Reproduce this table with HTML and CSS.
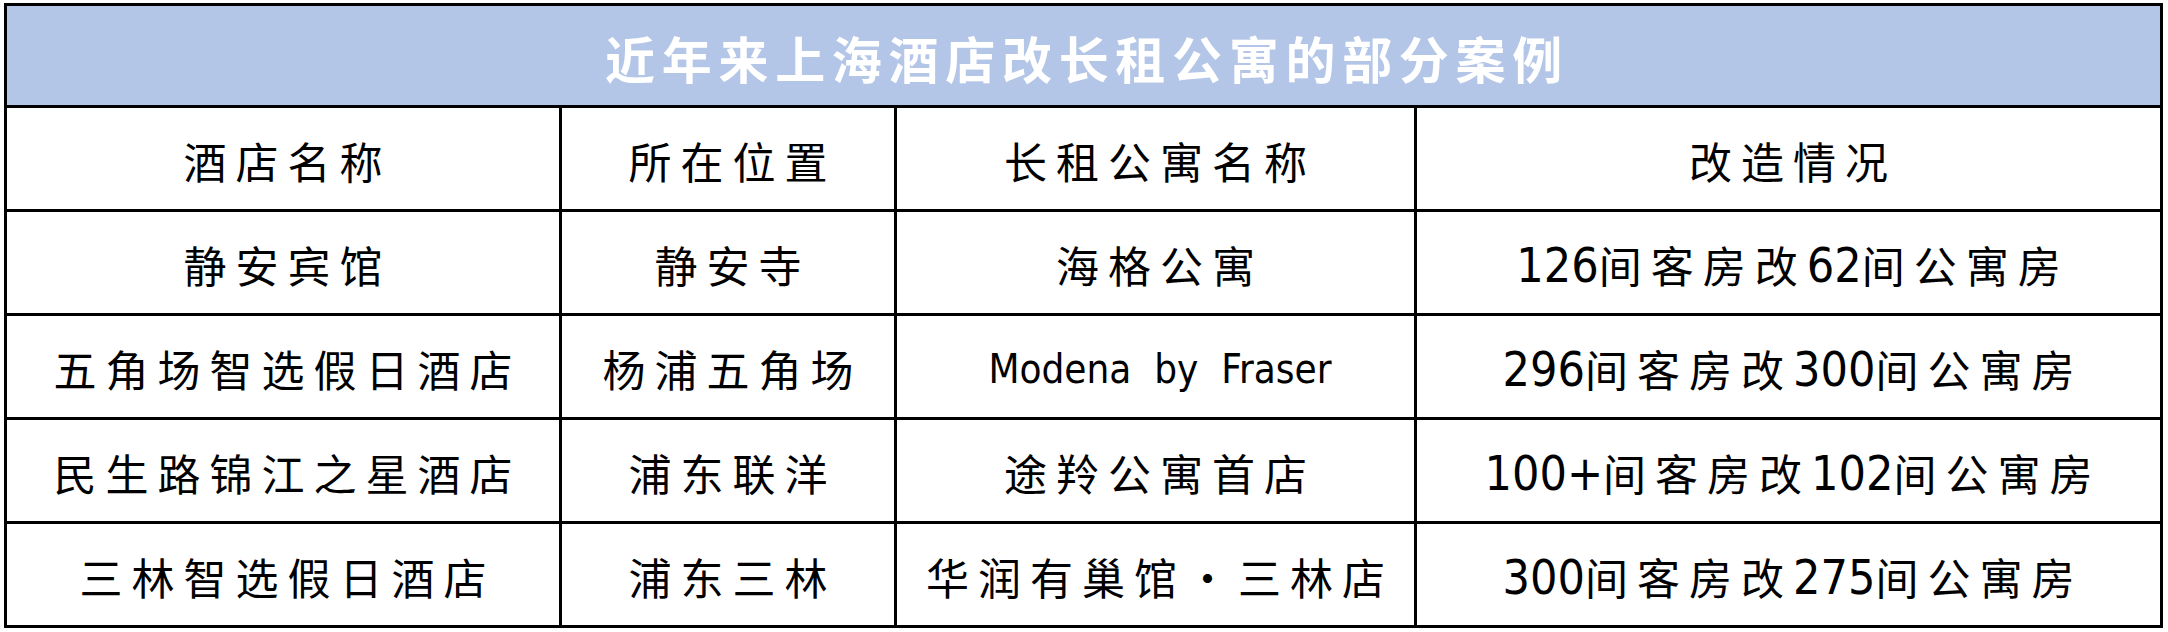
FILE: index.html
```html
<!DOCTYPE html>
<html lang="zh-CN">
<head>
<meta charset="utf-8">
<title>近年来上海酒店改长租公寓的部分案例</title>
<link rel="stylesheet" href="styles.css">
</head>
<body>
<div class="sheet">
  <div class="table">
    <div class="cell title">近年来上海酒店改长租公寓的部分案例</div>

    <div class="cell">酒店名称</div>
    <div class="cell">所在位置</div>
    <div class="cell">长租公寓名称</div>
    <div class="cell">改造情况</div>

    <div class="cell">静安宾馆</div>
    <div class="cell">静安寺</div>
    <div class="cell">海格公寓</div>
    <div class="cell"><span class="num">126</span>间客房改<span class="num">62</span>间公寓房</div>

    <div class="cell">五角场智选假日酒店</div>
    <div class="cell">杨浦五角场</div>
    <div class="cell"><span class="latin">Modena  by  Fraser</span></div>
    <div class="cell"><span class="num">296</span>间客房改<span class="num">300</span>间公寓房</div>

    <div class="cell">民生路锦江之星酒店</div>
    <div class="cell">浦东联洋</div>
    <div class="cell">途羚公寓首店</div>
    <div class="cell"><span class="num">100+</span>间客房改<span class="num">102</span>间公寓房</div>

    <div class="cell">三林智选假日酒店</div>
    <div class="cell">浦东三林</div>
    <div class="cell">华润有巢馆·三林店</div>
    <div class="cell"><span class="num">300</span>间客房改<span class="num">275</span>间公寓房</div>
  </div>
</div>
</body>
</html>
```

FILE: styles.css
```css
html, body {
  margin: 0;
  padding: 0;
  background: #ffffff;
}

.sheet {
  padding: 3px 0 0 4px;
}

.table {
  display: grid;
  grid-template-columns: 552px 332px 517px 743px;
  grid-template-rows: 99px repeat(5, 101px);
  gap: 3px;
  padding: 3px;
  width: max-content;
  background: #000000;
}

.cell {
  display: flex;
  align-items: center;
  justify-content: center;
  padding-top: 4px;
  padding-left: 9px;
  box-sizing: border-box;
  background: #ffffff;
  color: #000000;
  font-family: "Noto Sans CJK SC", "Noto Sans", sans-serif;
  font-size: 43px;
  line-height: 1;
  letter-spacing: 9px;
  white-space: nowrap;
}

.title {
  grid-column: 1 / -1;
  background: #b4c6e7;
  color: #ffffff;
  font-size: 50px;
  font-weight: 700;
  letter-spacing: 6.7px;
  padding-top: 2px;
  padding-left: 7px;
}

.num {
  font-family: "Liberation Sans Narrow", "DejaVu Sans Condensed", "Liberation Sans", sans-serif;
  font-size: 48px;
  letter-spacing: 0;
}

.latin {
  font-family: "Liberation Sans Narrow", "DejaVu Sans Condensed", "Liberation Sans", sans-serif;
  font-size: 40px;
  letter-spacing: 0;
  white-space: pre;
}
```
